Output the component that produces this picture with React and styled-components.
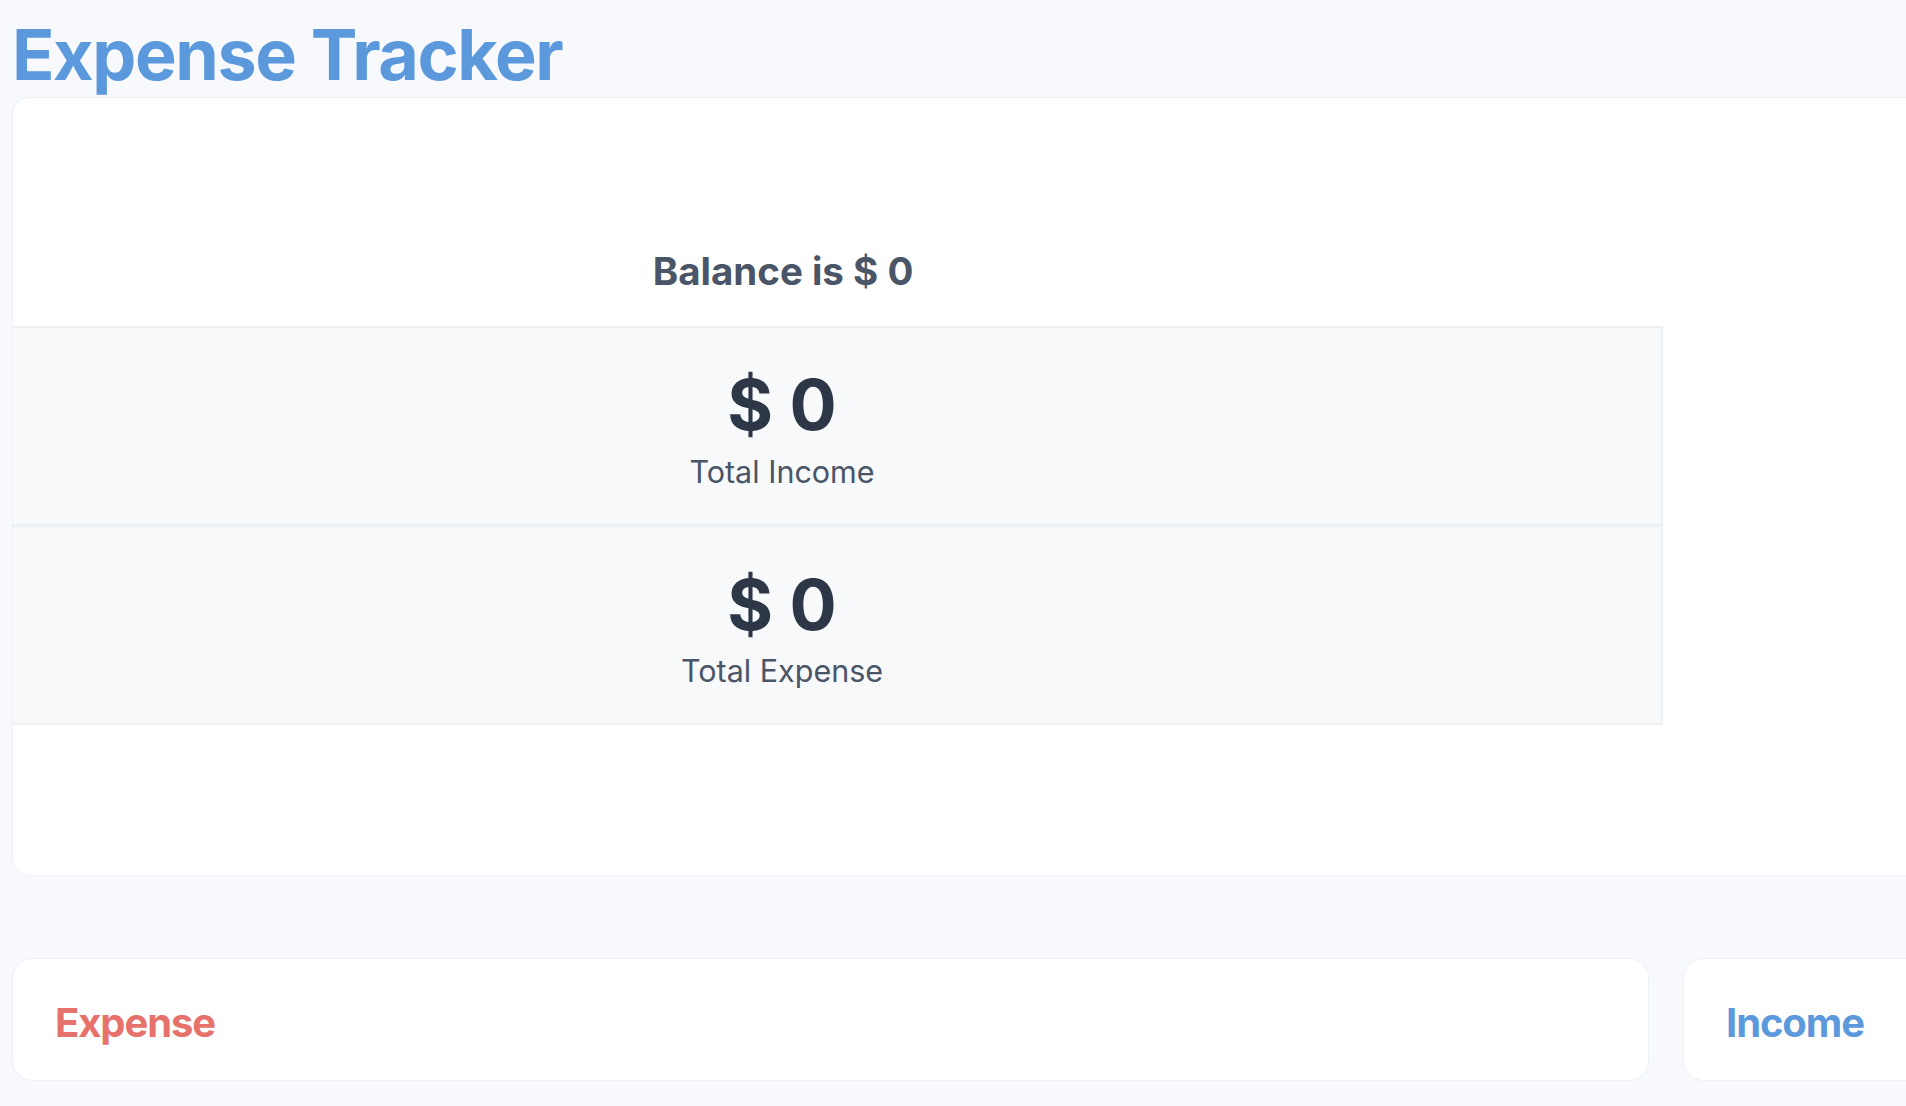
import React from "react";
import styled, { createGlobalStyle } from "styled-components";

const Global = createGlobalStyle`
  html, body {
    margin: 0;
    padding: 0;
    background: #f7f9fc;
    overflow: hidden;
    font-family: Inter, "Noto Sans", "Liberation Sans", sans-serif;
  }
`;

const Page = styled.div`
  width: 100vw;
  height: 100vh;
  overflow: hidden;
  box-sizing: border-box;
  padding: 12px;
`;

const Content = styled.div`
  width: 3308px;
`;

const Title = styled.h1`
  margin: 0;
  font-size: 70px;
  font-weight: 700;
  line-height: normal;
  color: #5b99dc;
  letter-spacing: -1.4px;
`;

const Card = styled.section`
  display: grid;
  grid-template-columns: 1650px 1fr;
  height: 779px;
  box-sizing: border-box;
  background: #ffffff;
  border: 1px solid #edf0f5;
  border-radius: 16px;
  overflow: hidden;
`;

const Summary = styled.div`
  display: flex;
  flex-direction: column;
  justify-content: center;
`;

const Balance = styled.h2`
  margin: 0 0 32px;
  padding-right: 110px;
  text-align: center;
  font-size: 38.5px;
  font-weight: 700;
  line-height: normal;
  letter-spacing: 0;
  color: #4a5568;
`;

const StatBox = styled.div`
  display: flex;
  flex-direction: column;
  align-items: center;
  padding: ${(p) => (p.$first ? "34px" : "35px")} 110px 34px 0;
  background: #f7f9fb;
  border: 2px solid #eceff4;
  border-left: none;
  border-top-width: ${(p) => (p.$first ? "2px" : "1px")};
`;

const Amount = styled.div`
  font-size: 70px;
  font-weight: 700;
  line-height: normal;
  color: #2d3748;
`;

const Label = styled.div`
  margin-top: ${(p) => (p.$tight ? "5px" : "6px")};
  font-size: 30.5px;
  font-weight: 400;
  line-height: normal;
  color: #4a5568;
`;

const Row = styled.div`
  display: grid;
  grid-template-columns: 1fr 1fr;
  gap: 34px;
  margin-top: 82px;
`;

const TypeCard = styled.div`
  height: 123px;
  box-sizing: border-box;
  padding: 39px 42px 0;
  background: #ffffff;
  border: 1px solid #edf0f5;
  border-radius: 20px;
`;

const TypeTitle = styled.h3`
  margin: 0;
  font-size: 40px;
  font-weight: 700;
  line-height: normal;
  letter-spacing: -1.1px;
  color: ${(p) => p.$color};
`;

export default function App() {
  return (
    <Page>
      <Global />
      <Content>
        <Title>Expense Tracker</Title>
        <Card>
          <Summary>
            <Balance>Balance is $ 0</Balance>
            <StatBox $first>
              <Amount>$ 0</Amount>
              <Label>Total Income</Label>
            </StatBox>
            <StatBox>
              <Amount>$ 0</Amount>
              <Label $tight>Total Expense</Label>
            </StatBox>
          </Summary>
          <div />
        </Card>
        <Row>
          <TypeCard>
            <TypeTitle $color="#e7716b">Expense</TypeTitle>
          </TypeCard>
          <TypeCard>
            <TypeTitle $color="#5b99dc">Income</TypeTitle>
          </TypeCard>
        </Row>
      </Content>
    </Page>
  );
}
